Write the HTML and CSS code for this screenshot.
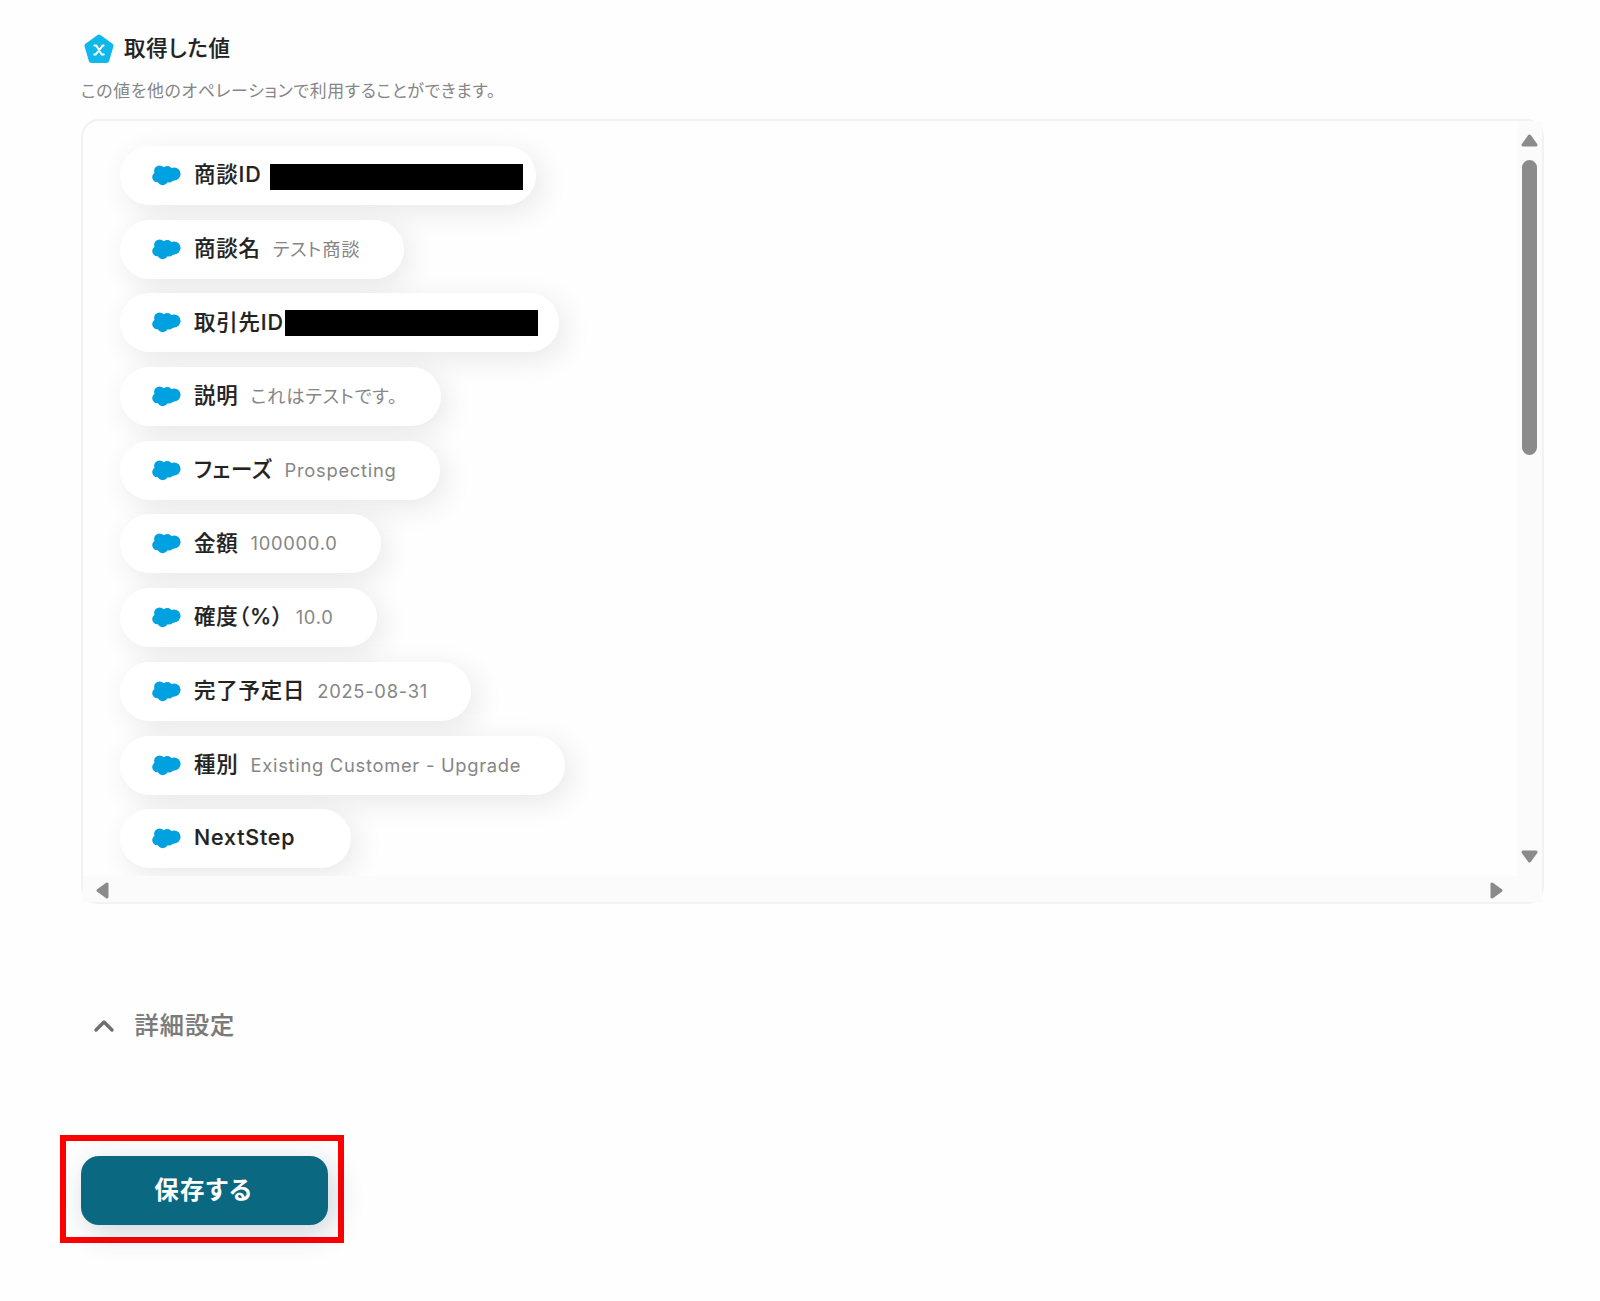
FILE: index.html
```html
<!DOCTYPE html>
<html lang="ja">
<head>
  <meta charset="utf-8">
  <title>取得した値</title>
  <link rel="stylesheet" href="styles.css">
</head>
<body>
  <svg class="defs" width="0" height="0">
    <symbol id="cloud" viewBox="0 0 29 21">
      <circle cx="7.6" cy="6" r="5.5"/>
      <circle cx="15.4" cy="5.9" r="4.9"/>
      <circle cx="22.1" cy="8.9" r="6.5"/>
      <circle cx="17" cy="12.2" r="5.2"/>
      <circle cx="19.6" cy="10" r="6"/>
      <circle cx="10.7" cy="15.2" r="5.1"/>
      <circle cx="5.4" cy="12.1" r="5.2"/>
      <circle cx="11.5" cy="9" r="7"/>
    </symbol>
  </svg>
  <div class="page">
    <div class="title">
      <svg class="title-icon" width="30" height="30" viewBox="0 0 30 30">
        <path d="M15 3L27 11.8L22.7 26.5H7.3L3 11.8Z" fill="#10b8ea" stroke="#10b8ea" stroke-width="5" stroke-linejoin="round"/>
        <path d="M10.4 11.6H12.3L17.6 20.6H19.8M19.6 11.6H18.6L11.6 20.6H10.2" fill="none" stroke="#fff" stroke-width="2" stroke-linecap="round" stroke-linejoin="round"/>
      </svg>
      <h1>取得した値</h1>
    </div>
    <p class="lead">この値を他のオペレーションで利用することができます。</p>

    <div class="panel">
      <div class="list">
        <div class="chip"><svg><use href="#cloud"/></svg><b>商談ID</b><span class="mask mask-a"></span></div>
        <div class="chip"><svg><use href="#cloud"/></svg><b>商談名</b><span>テスト商談</span></div>
        <div class="chip"><svg><use href="#cloud"/></svg><b>取引先ID</b><span class="mask mask-b"></span></div>
        <div class="chip"><svg><use href="#cloud"/></svg><b>説明</b><span>これはテストです。</span></div>
        <div class="chip"><svg><use href="#cloud"/></svg><b>フェーズ</b><span>Prospecting</span></div>
        <div class="chip"><svg><use href="#cloud"/></svg><b>金額</b><span>100000.0</span></div>
        <div class="chip"><svg><use href="#cloud"/></svg><b>確度（%）</b><span>10.0</span></div>
        <div class="chip"><svg><use href="#cloud"/></svg><b>完了予定日</b><span>2025-08-31</span></div>
        <div class="chip"><svg><use href="#cloud"/></svg><b>種別</b><span>Existing Customer - Upgrade</span></div>
        <div class="chip"><svg><use href="#cloud"/></svg><b>NextStep</b><span></span></div>
      </div>
      <div class="bar-y">
        <svg class="arrow" width="17" height="13" viewBox="0 0 17 13"><path d="M8.5 2L15 11H2Z"/></svg>
        <div class="thumb"></div>
        <svg class="arrow" width="17" height="13" viewBox="0 0 17 13"><path d="M8.5 11L15 2H2Z"/></svg>
      </div>
      <div class="bar-x">
        <svg class="arrow" width="13" height="17" viewBox="0 0 13 17"><path d="M2 8.5L11 2V15Z"/></svg>
        <svg class="arrow" width="13" height="17" viewBox="0 0 13 17"><path d="M11 8.5L2 2V15Z"/></svg>
      </div>
      <div class="corner"></div>
    </div>

    <div class="detail">
      <svg width="22" height="15" viewBox="0 0 22 15"><path d="M3 12L11 4L19 12" fill="none" stroke="#6f6f6f" stroke-width="3.4" stroke-linecap="round" stroke-linejoin="round"/></svg>
      <span>詳細設定</span>
    </div>

    <div class="highlight">
      <button class="save">保存する</button>
    </div>
  </div>
</body>
</html>
```
FILE: styles.css
```css
body {
  margin: 0;
  background-color: #fefefe;
  font-family: Inter, "Noto Sans CJK JP", sans-serif;
  font-feature-settings: "palt";
  color: #222;
}
.defs {
  display: block;
}
.page {
  height: 1301px;
  overflow: hidden;
  padding-left: 81px;
  box-sizing: border-box;
}
.title {
  display: flex;
  height: 32px;
  padding: 33px 0 0 3px;
}
.title-icon {
  margin: 1px 10px 0 0;
}
h1 {
  margin: 0;
  font-size: 21.4px;
  font-weight: 500;
  line-height: 30px;
  letter-spacing: 0.8px;
  -webkit-text-stroke: 0.2px #222;
}
.lead {
  margin: 14px 0 0;
  height: 40px;
  font-size: 16.9px;
  line-height: 24px;
  letter-spacing: 0.67px;
  color: #868686;
}
.panel {
  display: grid;
  grid-template-columns: 1fr 25px;
  grid-template-rows: 1fr 26px;
  width: 1463px;
  height: 785px;
  box-sizing: border-box;
  border: 2px solid #f2f2f2;
  border-radius: 18px;
}
.list {
  display: flex;
  flex-direction: column;
  align-items: flex-start;
  gap: 14.7px;
  min-height: 0;
  padding: 25px 0 0 37px;
  border-radius: 16px 0 0 0;
  overflow: hidden;
}
.chip {
  display: flex;
  flex: none;
  align-items: center;
  height: 59px;
  box-sizing: border-box;
  padding: 0 43.5px 0 32px;
  border-radius: 30px;
  background-color: #fff;
  box-shadow: 6px 7px 30px rgba(0, 0, 0, 0.09);
  white-space: nowrap;
}
.chip svg {
  width: 29px;
  height: 21px;
  margin-right: 13px;
  fill: #00a1e0;
}
.chip b {
  font-size: 21.4px;
  font-weight: 500;
  line-height: 30px;
  letter-spacing: 0.85px;
  margin: -2.5px 12px 0 0;
  -webkit-text-stroke: 0.2px #222;
}
.chip span {
  font-size: 18.35px;
  line-height: 28px;
  letter-spacing: 0.72px;
  margin-top: -1px;
  color: #868686;
}
.chip .mask {
  width: 253px;
  height: 26px;
  background-color: #000;
}
.chip .mask-a {
  margin: 3px -30.5px 0 -3px;
}
.chip .mask-b {
  margin: 0 -23px 0 -10.5px;
}
.bar-y {
  display: flex;
  flex-direction: column;
  align-items: center;
  padding: 13px 0;
  background-color: #fbfbfb;
}
.thumb {
  width: 15px;
  height: 295px;
  margin: 13px 0 auto;
  border-radius: 8px;
  background-color: #8b8b8b;
}
.bar-x {
  display: flex;
  align-items: center;
  justify-content: space-between;
  padding: 2px 14px 0 12.5px;
  background-color: #fbfbfb;
}
.corner {
  background-color: #fbfbfb;
}
.arrow {
  flex: none;
  fill: #8b8b8b;
  stroke: #8b8b8b;
  stroke-width: 3px;
  stroke-linejoin: round;
}
.detail {
  display: flex;
  align-items: center;
  height: 36px;
  margin: 103px 0 0 12px;
  font-size: 24.2px;
  font-weight: 500;
  line-height: 36px;
  letter-spacing: 1px;
  color: #7a7a7a;
  -webkit-text-stroke: 0.2px #7a7a7a;
}
.detail svg {
  margin: 0 19.5px 0 0;
}
.detail span {
  margin-top: 1px;
}
.highlight {
  width: 284px;
  height: 108px;
  box-sizing: border-box;
  margin: 92px 0 0 -21px;
  padding: 15px;
  border: 6px solid #f00;
}
.save {
  display: block;
  width: 247px;
  height: 69px;
  padding: 0 2px 5px 0;
  border: none;
  border-radius: 18px;
  background-color: #0a6880;
  box-shadow: 6px 8px 30px rgba(20, 50, 70, 0.2);
  color: #fff;
  font: inherit;
  font-feature-settings: "palt";
  font-size: 24.5px;
  font-weight: 700;
  letter-spacing: 1.2px;
}
```
